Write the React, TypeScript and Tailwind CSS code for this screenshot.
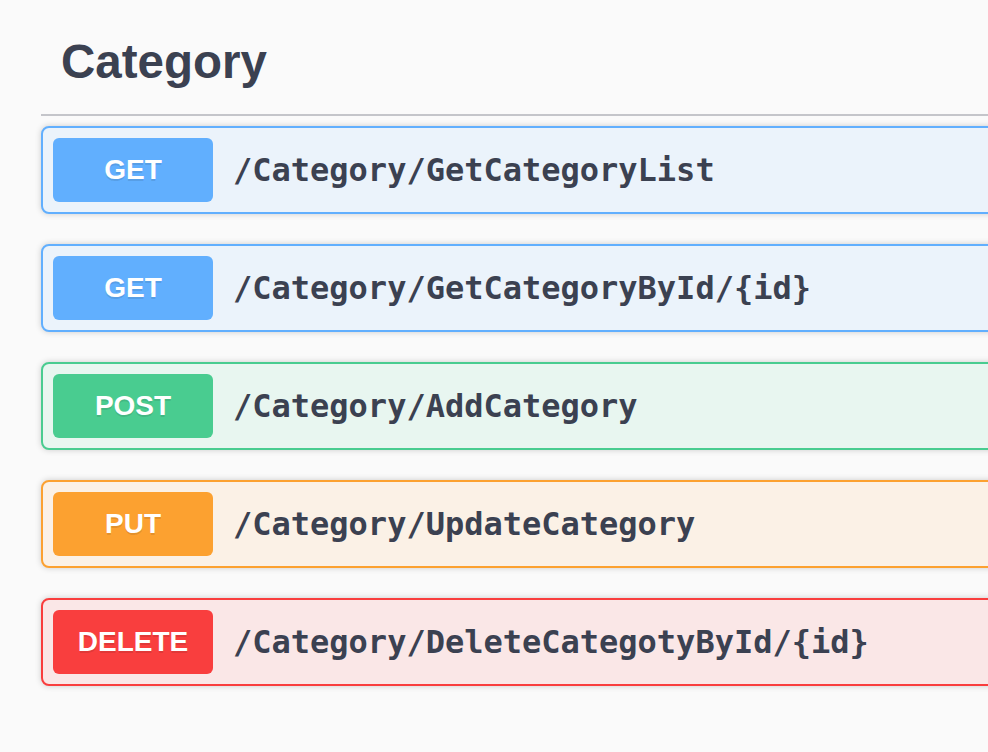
const endpoints = [
  { method: 'GET', path: '/Category/GetCategoryList', block: 'border-[#61affe] bg-[#ebf3fb]', badge: 'bg-[#61affe]' },
  { method: 'GET', path: '/Category/GetCategoryById/{id}', block: 'border-[#61affe] bg-[#ebf3fb]', badge: 'bg-[#61affe]' },
  { method: 'POST', path: '/Category/AddCategory', block: 'border-[#49cc90] bg-[#e8f6f0]', badge: 'bg-[#49cc90]' },
  { method: 'PUT', path: '/Category/UpdateCategory', block: 'border-[#fca130] bg-[#fbf1e6]', badge: 'bg-[#fca130]' },
  { method: 'DELETE', path: '/Category/DeleteCategotyById/{id}', block: 'border-[#f93e3e] bg-[#fae7e7]', badge: 'bg-[#f93e3e]' },
]

export default function App() {
  return (
    <div className="h-[752px] w-[988px] overflow-hidden bg-[#fafafa] font-['Liberation_Sans',Arial,sans-serif] text-[#3b4151]">
      <div className="w-[1200px] pl-[41px]">
        {/* Tag header */}
        <h3 className="flex h-[116px] items-center border-b-2 border-[#c4c5ca] pl-[20px] pt-[10px] text-[47.5px] font-bold">
          Category
        </h3>

        {/* Operations */}
        <div className="mt-[10px] flex flex-col gap-[30px]">
          {endpoints.map((ep) => (
            <div
              key={ep.path}
              className={`flex h-[88px] items-center rounded-[8px] border-2 px-[10px] shadow-[0_0_6px_rgba(0,0,0,0.19)] ${ep.block}`}
            >
              <span
                className={`flex h-[64px] w-[160px] items-center justify-center rounded-[6px] text-[28px] font-bold text-white [text-shadow:0_2px_0_rgba(0,0,0,0.1)] ${ep.badge}`}
              >
                {ep.method}
              </span>
              <span className="ml-[20px] font-['DejaVu_Sans_Mono',monospace] text-[32px] font-bold text-[#3b4151]">
                {ep.path}
              </span>
            </div>
          ))}
        </div>
      </div>
    </div>
  )
}
